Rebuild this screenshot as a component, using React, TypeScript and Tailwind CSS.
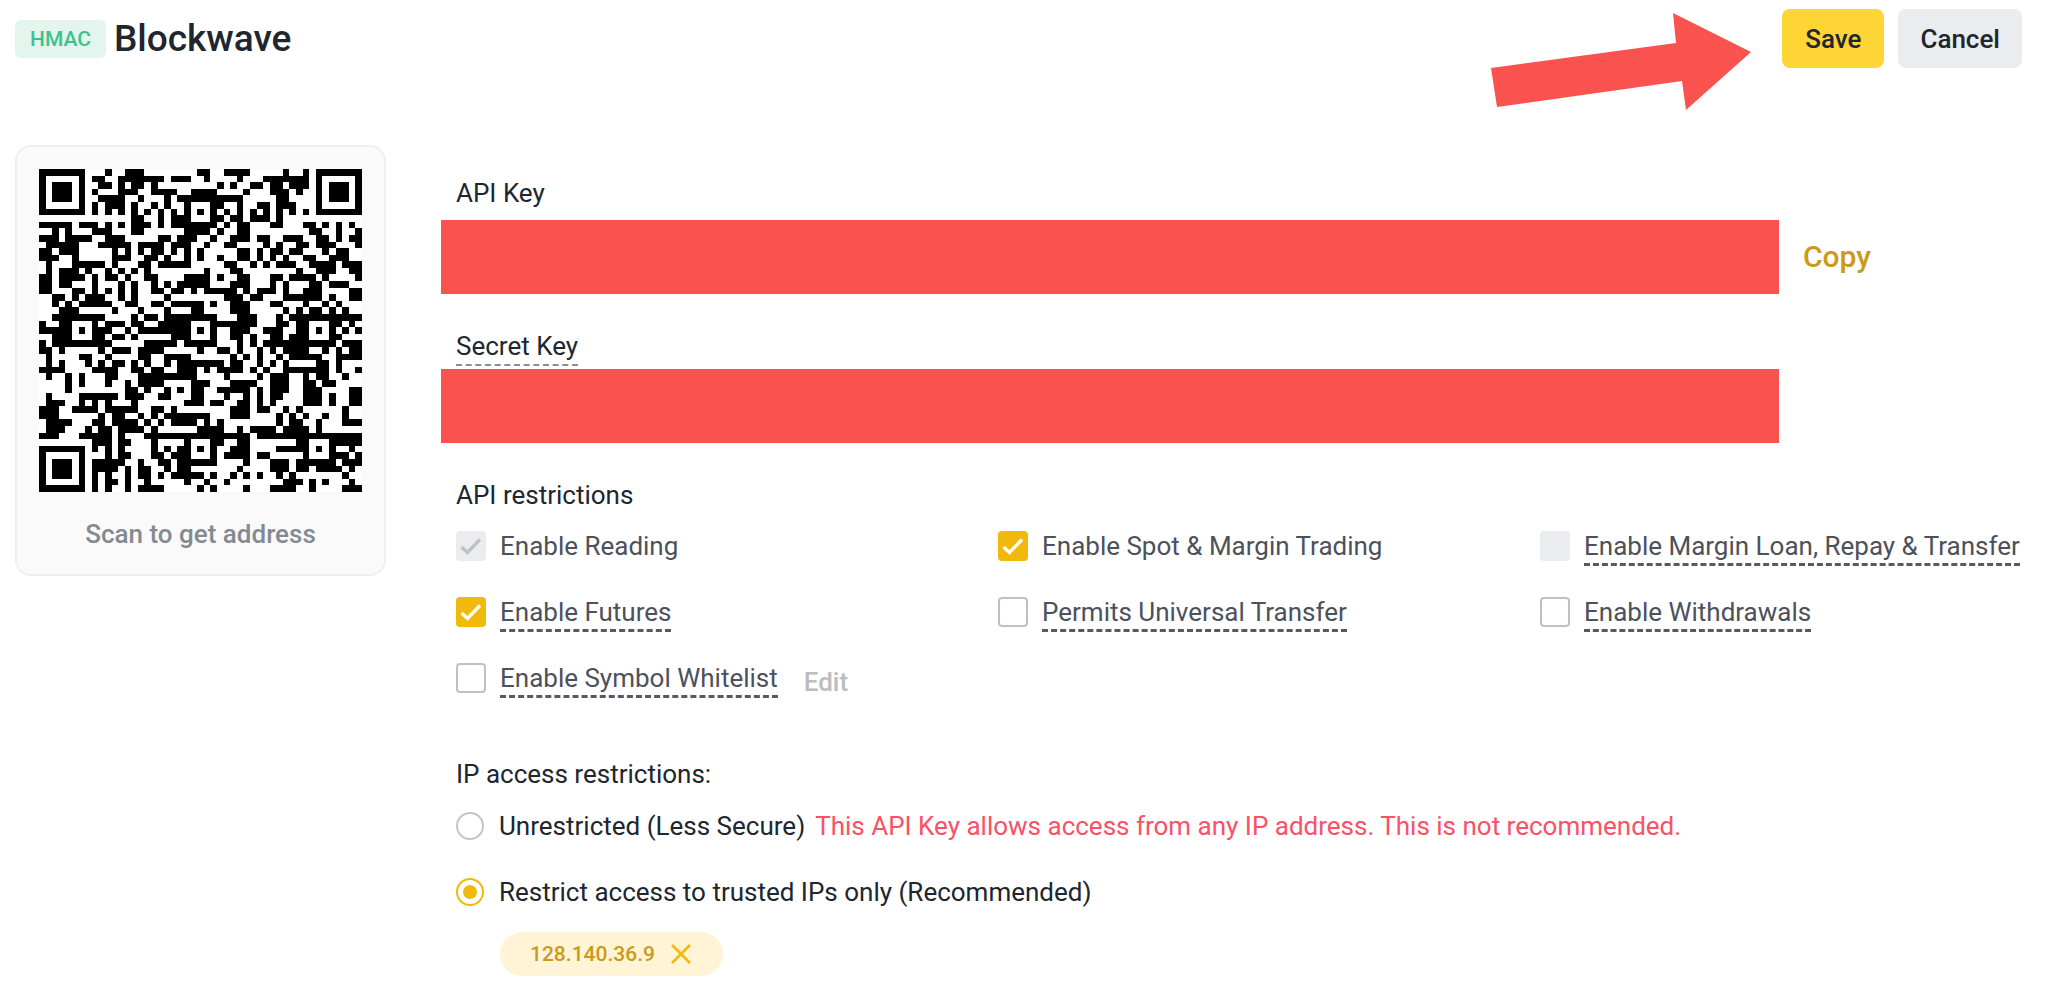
import { useState } from "react";
import { clsx } from "clsx";

const permissions = [
  { id: "reading", label: "Enable Reading", checked: true, disabled: true },
  { id: "spot", label: "Enable Spot & Margin Trading", checked: true },
  { id: "loan", label: "Enable Margin Loan, Repay & Transfer", disabled: true, hint: true },
  { id: "futures", label: "Enable Futures", checked: true, hint: true },
  { id: "universal", label: "Permits Universal Transfer", hint: true },
  { id: "withdrawals", label: "Enable Withdrawals", hint: true },
  { id: "whitelist", label: "Enable Symbol Whitelist", hint: true, editable: true },
];

// dark runs per row, written as "start-end" with the end excluded
const qrRows = [
  "0-7 10-11 13-16 24-26 28-32 37-38 40-41 42-49",
  "0-1 6-7 8-10 12-19 20-23 25-26 30-31 34-41 42-43 48-49",
  "0-1 2-5 6-7 9-11 12-13 14-16 17-18 27-28 29-30 32-34 35-37 38-41 42-43 44-47 48-49",
  "0-1 2-5 6-7 8-9 12-15 17-21 23-27 31-32 35-38 39-40 42-43 44-47 48-49",
  "0-1 2-5 6-7 9-13 15-16 19-20 21-31 36-38 42-43 44-47 48-49",
  "0-1 6-7 8-9 10-13 14-15 17-18 19-20 22-23 26-28 30-31 33-35 36-39 42-43 48-49",
  "0-7 8-9 10-11 12-13 14-15 16-17 18-19 20-21 22-23 24-25 26-27 28-29 30-31 32-33 34-35 36-37 38-39 40-41 42-49",
  "14-16 18-19 20-23 26-28 29-31 32-35 36-37",
  "0-5 6-9 10-11 12-13 14-17 18-19 20-27 28-29 30-32 35-37 40-42 43-44 45-46 47-48",
  "2-3 4-5 8-11 14-16 22-26 27-28 30-32 41-43 45-46 48-49",
  "0-3 4-8 10-13 18-20 21-24 26-27 29-32 33-35 37-40 42-44 45-46 47-49",
  "1-6 9-14 15-19 20-23 25-26 28-30 34-35 36-37 39-41 42-45 48-49",
  "0-2 3-6 11-12 13-14 15-16 17-19 20-21 22-23 24-25 30-32 33-34 35-37 38-40 43-44 45-47",
  "0-3 5-6 11-14 16-18 19-20 22-23 24-25 27-28 30-32 33-34 35-36 37-38 40-42 44-47",
  "1-2 5-10 11-12 15-17 18-23 28-30 32-33 34-35 36-39 41-45 46-49",
  "1-2 3-6 7-8 10-11 12-13 14-15 16-17 25-26 29-31 39-40 42-45 47-49",
  "0-2 3-7 8-9 10-12 13-14 16-18 22-26 27-28 30-32 35-37 38-42 43-44 48-49",
  "0-2 3-5 8-9 12-13 14-15 17-18 19-20 21-26 29-32 35-36 37-38 41-43 44-47",
  "0-2 5-7 8-9 10-11 12-13 14-15 17-19 20-22 23-24 25-30 31-32 33-36 37-38 40-43 47-49",
  "2-4 5-6 7-10 12-13 14-15 19-20 28-31 32-34 37-43 44-45 47-49",
  "2-3 4-5 6-11 13-15 17-19 20-25 26-27 29-32 35-37 40-41 43-44 45-46",
  "3-6 11-12 15-16 19-20 23-25 29-32 37-38 39-40 41-43 44-45 46-47",
  "2-10 14-15 16-18 19-27 30-33 36-37 38-49",
  "0-1 3-5 8-9 10-13 14-16 18-23 26-33 36-38 39-41 44-46 47-48",
  "0-5 6-7 8-11 13-14 15-23 24-25 26-27 29-32 34-37 39-41 42-43 44-45 46-47 48-49",
  "2-5 8-10 11-13 14-15 20-23 26-27 29-31 32-33 35-37 38-41 44-46",
  "0-1 2-11 16-21 22-27 30-31 32-33 34-45 46-49",
  "0-2 3-4 9-10 11-14 15-19 24-25 27-29 30-31 33-34 35-36 37-41 43-44 45-46 47-49",
  "1-2 6-8 10-11 15-17 19-23 29-30 31-32 33-34 36-37 38-43 45-49",
  "1-2 3-4 7-8 9-10 11-13 14-15 16-17 19-20 21-28 29-31 33-34 35-36 37-38 42-44 45-46",
  "0-4 8-12 14-16 17-19 21-24 25-26 27-31 32-33 34-35 37-44 45-46 48-49",
  "1-2 4-5 6-7 10-12 15-24 28-29 33-34 35-38 40-41 42-44 46-47",
  "4-5 6-7 10-11 13-14 15-19 23-26 29-33 35-38 40-42 43-45",
  "4-5 13-15 16-17 19-20 21-22 23-25 27-32 33-34 35-38 40-43 47-49",
  "1-2 6-12 13-16 18-20 23-25 28-29 31-32 33-34 35-37 40-43 44-45 47-49",
  "1-4 6-7 8-9 10-11 14-15 22-25 26-28 30-32 33-34 35-36 40-43 44-45 47-49",
  "0-3 5-9 10-15 17-19 20-21 29-32 33-35 37-38 39-40 46-47",
  "0-3 9-10 11-13 15-16 17-18 19-26 29-32 36-37 38-39 40-41 43-44 46-47",
  "1-5 8-10 11-15 16-17 18-19 20-24 25-26 27-28 36-37 38-40 42-43 46-49",
  "1-4 7-8 9-11 12-16 17-18 24-28 30-31 32-36 37-41 42-43",
  "0-3 6-11 12-13 16-32 33-49",
  "8-11 12-14 17-18 22-23 26-28 30-32 39-41 44-49",
  "0-7 8-9 10-11 12-13 17-18 19-20 21-23 24-25 26-27 29-32 36-41 42-43 44-45 47-48",
  "0-1 6-7 10-11 12-14 17-19 20-23 26-27 28-32 33-35 40-41 44-47 48-49",
  "0-1 2-5 6-7 8-13 15-16 18-20 21-27 31-32 35-38 39-45 46-49",
  "0-1 2-5 6-7 8-12 13-14 15-17 19-20 21-23 30-31 35-38 39-41 42-46 47-48",
  "0-1 2-5 6-7 8-9 10-11 13-14 15-17 18-19 20-25 26-27 29-30 31-32 33-34 36-37 38-39 46-47",
  "0-1 6-7 8-9 10-12 13-14 16-17 22-23 25-26 28-29 37-40 41-42 43-44 47-48",
  "0-7 8-9 10-11 13-14 15-19 24-25 26-27 31-32 35-39 41-42 46-49",
];

const qrPath = qrRows
  .map((row, y) =>
    row
      .split(" ")
      .map((run) => {
        const [from, to] = run.split("-").map(Number);
        return `M${from} ${y}h${to - from}v1H${from}z`;
      })
      .join("")
  )
  .join("");

function QrCard() {
  return (
    <aside className="w-[371px] shrink-0 rounded-2xl border-2 border-[#eeeff1] bg-[#fafafa] px-[22px] pt-[22px] pb-6 text-center">
      <svg viewBox="0 0 49 49" className="w-full bg-white" shapeRendering="crispEdges" role="img" aria-label="QR code">
        <path d={qrPath} fill="#000" />
      </svg>
      <p className="mt-[26px] font-medium text-[#848a92]">Scan to get address</p>
    </aside>
  );
}

function Permission({ id, label, checked = false, disabled = false, hint = false, editable = false }) {
  const [on, setOn] = useState(checked);

  return (
    <div className="flex h-9 items-start">
      <span className="relative mt-px flex shrink-0">
        <input
          id={id}
          type="checkbox"
          checked={on}
          disabled={disabled}
          onChange={() => setOn(!on)}
          className={clsx(
            "size-[30px] appearance-none rounded",
            disabled ? "bg-[#eaecef]" : on ? "bg-[#f0b90b]" : "border-2 border-[#bfc1c6] bg-white"
          )}
        />
        {on && (
          <svg viewBox="0 0 30 30" className="pointer-events-none absolute inset-0" fill="none">
            <path d="M5.5 16L11.5 21.5L24 8.5" stroke={disabled ? "#c0c1c3" : "#fff"} strokeWidth="3.4" />
          </svg>
        )}
      </span>
      <label
        htmlFor={id}
        className={clsx("ml-3.5 whitespace-nowrap text-[#4c515b]", hint && "border-b-3 border-dashed border-[#555a64] pb-px")}
      >
        {label}
      </label>
      {editable && (
        <button disabled className="mt-1 ml-[26px] font-medium text-[#bcbdc1]">
          Edit
        </button>
      )}
    </div>
  );
}

function IpOption({ id, label, checked, onChange, children = null }) {
  return (
    <div className="flex items-center">
      <span className="relative flex shrink-0">
        <input
          id={id}
          type="radio"
          name="ip-access"
          checked={checked}
          onChange={onChange}
          className={clsx(
            "size-7 appearance-none rounded-full border-2",
            checked ? "border-[#f0b90b]" : "border-[#c4c5c8]"
          )}
        />
        {checked && <span className="pointer-events-none absolute inset-[7px] rounded-full bg-[#f0b90b]" />}
      </span>
      <label htmlFor={id} className="ml-[15px]">
        {label}
      </label>
      {children}
    </div>
  );
}

export default function App() {
  const [access, setAccess] = useState("trusted");
  const [ips, setIps] = useState(["128.140.36.9"]);

  return (
    <div className="relative min-h-screen bg-white pt-[9px] pr-[26px] pb-7 pl-[15px] font-['Roboto',sans-serif] text-[26px] leading-8 text-[#20262d]">
      <header className="flex h-[59px] items-center">
        <span className="rounded-md bg-[#e3f5ec] px-[15px] py-1.5 text-[21px] leading-[26px] font-medium text-[#3bc28d]">
          HMAC
        </span>
        <h1 className="ml-2 text-[37px] leading-10 font-medium">Blockwave</h1>
        <div className="ml-auto flex gap-3.5">
          <button className="h-[59px] min-w-[102px] rounded-lg bg-[#fdd535] px-[22px] font-medium">Save</button>
          <button className="h-[59px] rounded-lg bg-[#eaecef] px-[22px] font-medium">Cancel</button>
        </div>
      </header>

      <svg
        viewBox="0 0 260 97"
        className="pointer-events-none absolute top-[13px] right-[297px] h-[97px] w-[260px]"
        aria-hidden="true"
      >
        <path d="M182 0L260 39L195 97L191 68L6 94L0 55L185 30Z" fill="#fa534f" />
      </svg>

      <main className="mt-[77px] flex items-start gap-[55px]">
        <QrCard />

        <div className="min-w-0 flex-1 pt-8">
          <h2 className="pl-[15px]">API Key</h2>
          <div className="mt-[11px] flex items-center">
            <div className="h-[74px] flex-1 bg-[#fa534f]" />
            <div className="w-[243px] pl-6">
              <button className="text-[30px] font-medium text-[#cb9a17]">Copy</button>
            </div>
          </div>

          <h2 className="mt-9 ml-[15px] w-fit border-b-2 border-dashed border-[#8a8e96] pb-0.5">Secret Key</h2>
          <div className="mt-[3px] mr-[243px] h-[74px] bg-[#fa534f]" />

          <div className="pl-[15px]">
            <h2 className="mt-9">API restrictions</h2>
            <div className="mt-[19px] grid grid-cols-3 gap-x-[60px] gap-y-[30px]">
              {permissions.map((p) => (
                <Permission key={p.id} {...p} />
              ))}
            </div>

            <h2 className="mt-[60px]">IP access restrictions:</h2>
            <div className="mt-5 flex flex-col gap-[34px]">
              <IpOption
                id="unrestricted"
                label="Unrestricted (Less Secure)"
                checked={access === "unrestricted"}
                onChange={() => setAccess("unrestricted")}
              >
                <span className="ml-2.5 text-[#fb5066]">
                  This API Key allows access from any IP address. This is not recommended.
                </span>
              </IpOption>
              <IpOption
                id="trusted"
                label="Restrict access to trusted IPs only (Recommended)"
                checked={access === "trusted"}
                onChange={() => setAccess("trusted")}
              />
            </div>

            <div className="mt-6 ml-11 flex gap-4">
              {ips.map((ip) => (
                <span
                  key={ip}
                  className="flex h-11 items-center gap-4 rounded-full bg-[#fff4d5] pr-8 pl-[30px] text-[21px] font-medium text-[#cb9a17]"
                >
                  {ip}
                  <button aria-label={`Remove ${ip}`} onClick={() => setIps(ips.filter((i) => i !== ip))}>
                    <svg viewBox="0 0 20 20" className="size-5" fill="none">
                      <path d="M1 1L19 19M19 1L1 19" stroke="#f0b90b" strokeWidth="2.6" />
                    </svg>
                  </button>
                </span>
              ))}
            </div>
          </div>
        </div>
      </main>
    </div>
  );
}
